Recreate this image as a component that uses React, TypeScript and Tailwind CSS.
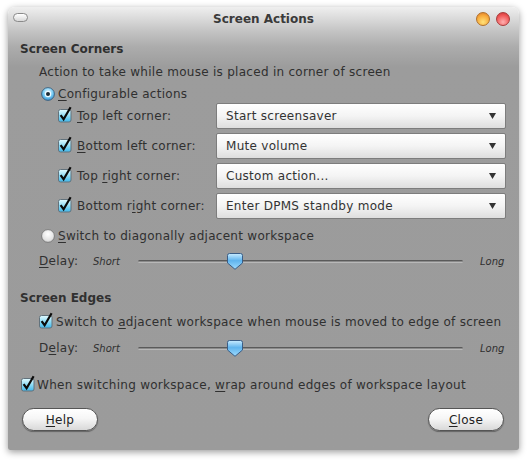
import React from "react";

const font = { fontFamily: '"DejaVu Sans", Verdana, sans-serif' };

function U({ children }: { children: React.ReactNode }) {
  return <span className="underline underline-offset-2 decoration-1">{children}</span>;
}

function Check({ className = "" }: { className?: string }) {
  return (
    <svg width="16" height="17" viewBox="0 0 16 17" className={className}>
      <defs>
        <linearGradient id="cbg" x1="0" y1="0" x2="0" y2="1">
          <stop offset="0" stopColor="#e4fbff" />
          <stop offset="0.5" stopColor="#8fdcf6" />
          <stop offset="1" stopColor="#3fb6ea" />
        </linearGradient>
      </defs>
      <rect x="1.5" y="3.5" width="12.5" height="12.5" rx="2" fill="url(#cbg)" stroke="#62727c" />
      <path d="M3.6 9.2 L6.6 13.2 L13.6 1.2" fill="none" stroke="#0a0a0a" strokeWidth="2.2" strokeLinejoin="miter" />
    </svg>
  );
}

function Radio({ on }: { on: boolean }) {
  return (
    <svg width="14" height="14" viewBox="0 0 14 14">
      <defs>
        <radialGradient id="rbOn" cx="0.5" cy="0.35" r="0.7">
          <stop offset="0" stopColor="#e6f8ff" />
          <stop offset="0.6" stopColor="#6cc6f2" />
          <stop offset="1" stopColor="#2f7fc4" />
        </radialGradient>
        <radialGradient id="rbOff" cx="0.5" cy="0.35" r="0.7">
          <stop offset="0" stopColor="#ffffff" />
          <stop offset="0.7" stopColor="#e2e2e2" />
          <stop offset="1" stopColor="#b8b8b8" />
        </radialGradient>
      </defs>
      <circle cx="7" cy="7" r="6.4" fill={on ? "url(#rbOn)" : "url(#rbOff)"} stroke={on ? "#3d5f7a" : "#777"} strokeWidth="0.9" />
      {on && <circle cx="7" cy="7" r="3.2" fill="#eefaff" />}
      {on && <circle cx="7" cy="7" r="2" fill="#1b2a36" />}
    </svg>
  );
}

function Combo({ label }: { label: string }) {
  return (
    <div className="w-[290px] h-[26px] flex items-center justify-between pl-[9px] pr-[9px] border border-[#7d7d7d] rounded-[2px] bg-[linear-gradient(to_bottom,#ffffff_0%,#f4f4f4_50%,#dedede_100%)] text-[#333]">
      <span>{label}</span>
      <svg width="7" height="6" viewBox="0 0 7 6">
        <path d="M0 0 L7 0 L3.5 6 Z" fill="#333" />
      </svg>
    </div>
  );
}

function Thumb() {
  return (
    <svg width="16" height="17" viewBox="0 0 16 17">
      <defs>
        <linearGradient id="th" x1="0" y1="0" x2="0" y2="1">
          <stop offset="0" stopColor="#c9ecff" />
          <stop offset="0.45" stopColor="#5fb4ee" />
          <stop offset="1" stopColor="#9fdcff" />
        </linearGradient>
      </defs>
      <path d="M2.5 0.5 H13.5 Q15.5 0.5 15.5 2.5 V10 L8 16.3 L0.5 10 V2.5 Q0.5 0.5 2.5 0.5 Z" fill="url(#th)" stroke="#3a5d86" />
    </svg>
  );
}

function DelayRow({ d }: { d: React.ReactNode }) {
  return (
    <div className="flex items-center h-[18px] ml-[31px]">
      <span className="w-[54px]">{d}</span>
      <span className="italic text-[10px] tracking-normal w-[45px]">Short</span>
      <div className="relative w-[325px] h-[18px] flex items-center">
        <div className="w-full h-[3px] border-t border-[#5a5a5a] border-b border-b-[#b8b8b8] bg-[#8a8a8a] rounded-full" />
        <div className="absolute left-[89px] top-[1px]">
          <Thumb />
        </div>
      </div>
      <span className="italic text-[10px] tracking-normal ml-[17px]">Long</span>
    </div>
  );
}

function CheckRow({ label, value, mt = 0 }: { label: React.ReactNode; value: string; mt?: number }) {
  return (
    <div className="flex items-center h-[26px] ml-[49px]" style={mt ? { marginTop: mt } : undefined}>
      <Check className="mt-[-3px]" />
      <span className="ml-[4px] w-[139px]">{label}</span>
      <Combo label={value} />
    </div>
  );
}

function PillButton({ children, className = "" }: { children: React.ReactNode; className?: string }) {
  return (
    <div
      className={
        "w-[76px] h-[23px] rounded-full border border-[#555] flex items-center justify-center text-[#222] shadow-[0_1px_1px_rgba(0,0,0,0.35)] bg-[linear-gradient(to_bottom,#ffffff_0%,#f6f6f6_45%,#d9d9d9_100%)] " +
        className
      }
    >
      {children}
    </div>
  );
}

export default function App() {
  return (
    <div className="w-[528px] h-[460px] bg-white pt-[7px] pl-[8px] text-[12px] tracking-[0.28px] text-[#303030]" style={font}>
      <div className="w-[511px] h-[443px] rounded-t-[7px] rounded-b-[2px] shadow-[0_2px_7px_rgba(0,0,0,0.4)] bg-[linear-gradient(to_bottom,#efefef_0px,#c4c4c4_24px,#acacac_40px,#9c9c9c_60px,#9b9b9b_100%)] flex flex-col">
        {/* title bar */}
        <div className="relative h-[24px] flex items-center justify-center">
          <div className="absolute left-[5px] top-[6px] w-[15px] h-[9px] rounded-full border border-[#8a8a8a] bg-[linear-gradient(to_bottom,#ffffff,#d8d8d8)]" />
          <span className="font-bold tracking-normal text-[#3a3a3a] mt-[-1px]">Screen Actions</span>
          <div className="absolute right-[29px] top-[5px] w-[14px] h-[14px] rounded-full border border-[#b0702a] bg-[radial-gradient(circle_at_50%_75%,#ffe27a_0%,#f7a93a_60%,#d8742a_100%)]" />
          <div className="absolute right-[9px] top-[5px] w-[14px] h-[14px] rounded-full border border-[#a83a3a] bg-[radial-gradient(circle_at_50%_75%,#ffb0b0_0%,#f05a5a_60%,#c82f2f_100%)]" />
        </div>

        <div className="flex flex-col">
          <div className="h-[18px] mt-[9px] ml-[12px] font-bold tracking-normal flex items-center">Screen Corners</div>
          <div className="h-[18px] mt-[5px] ml-[31px] flex items-center">
            Action to take while mouse is placed in corner of screen
          </div>
          <div className="h-[18px] mt-[4px] ml-[33px] flex items-center">
            <Radio on />
            <span className="ml-[3px]">
              <U>C</U>onfigurable actions
            </span>
          </div>
          <CheckRow label={<><U>T</U>op left corner:</>} value="Start screensaver" />
          <CheckRow mt={4} label={<><U>B</U>ottom left corner:</>} value="Mute volume" />
          <CheckRow mt={4} label={<>Top <U>r</U>ight corner:</>} value="Custom action..." />
          <CheckRow mt={4} label={<>Bottom r<U>i</U>ght corner:</>} value="Enter DPMS standby mode" />
          <div className="h-[18px] mt-[8px] ml-[33px] flex items-center">
            <Radio on={false} />
            <span className="ml-[3px]">
              <U>S</U>witch to diagonally adjacent workspace
            </span>
          </div>
          <div className="mt-[7px]">
            <DelayRow d={<><U>D</U>elay:</>} />
          </div>

          <div className="h-[18px] mt-[19px] ml-[12px] font-bold tracking-normal flex items-center">Screen Edges</div>
          <div className="h-[18px] mt-[6px] ml-[30px] flex items-center">
            <Check className="mt-[-3px]" />
            <span className="ml-[2px]">
              Switch to <U>a</U>djacent workspace when mouse is moved to edge of screen
            </span>
          </div>
          <div className="mt-[8px]">
            <DelayRow d={<>D<U>e</U>lay:</>} />
          </div>

          <div className="h-[18px] mt-[19px] ml-[12px] flex items-center">
            <Check className="mt-[-3px]" />
            <span className="ml-[1px]">
              When switching workspace, <U>w</U>rap around edges of workspace layout
            </span>
          </div>

          <div className="mt-[14px] flex justify-between pl-[14px] pr-[15px]">
            <PillButton>
              <span>
                <U>H</U>elp
              </span>
            </PillButton>
            <PillButton>
              <span>
                <U>C</U>lose
              </span>
            </PillButton>
          </div>
        </div>
      </div>
    </div>
  );
}
